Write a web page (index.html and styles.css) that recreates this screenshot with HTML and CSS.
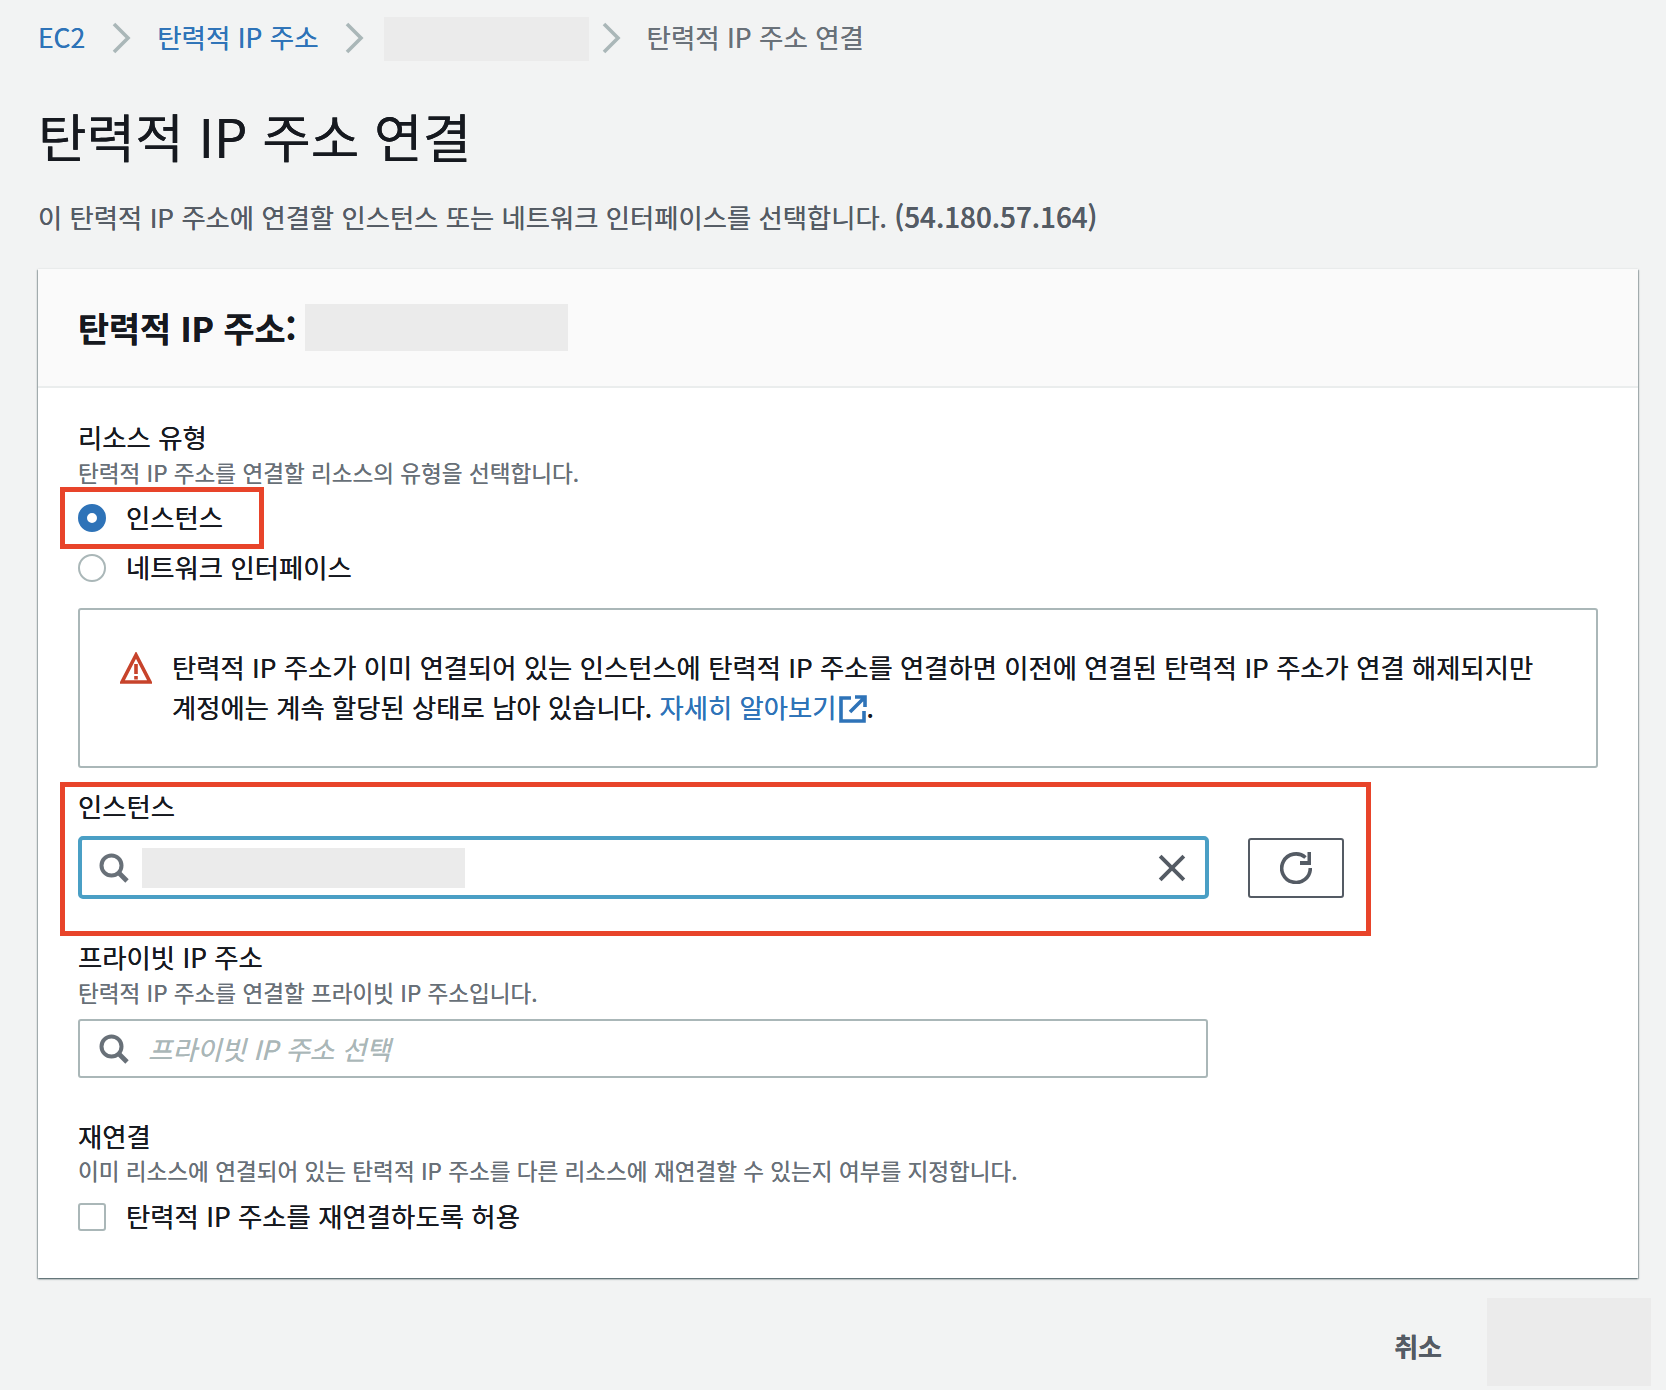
FILE: index.html
```html
<!DOCTYPE html>
<html lang="ko">
<head>
<meta charset="utf-8">
<title>탄력적 IP 주소 연결</title>
<link rel="stylesheet" href="styles.css">
</head>
<body>
<main class="page">
  <nav class="crumbs">
    <a class="crumb-link">EC2</a>
    <svg class="chev" viewBox="0 0 20 32"><path d="M3 2l14 14L3 30" fill="none" stroke="#aab7b8" stroke-width="3.6"/></svg>
    <a class="crumb-link">탄력적 IP 주소</a>
    <svg class="chev chev-second" viewBox="0 0 20 32"><path d="M3 2l14 14L3 30" fill="none" stroke="#aab7b8" stroke-width="3.6"/></svg>
    <span class="blank blank-crumb"></span>
    <svg class="chev chev-last" viewBox="0 0 20 32"><path d="M3 2l14 14L3 30" fill="none" stroke="#aab7b8" stroke-width="3.6"/></svg>
    <span class="crumb-current">탄력적 IP 주소 연결</span>
  </nav>
  <h1 class="title">탄력적 IP 주소 연결</h1>
  <p class="subtitle">이 탄력적 IP 주소에 연결할 인스턴스 또는 네트워크 인터페이스를 선택합니다. <span class="address">(54.180.57.164)</span></p>

  <section class="card">
    <header class="card-head">
      <h2 class="card-title">탄력적 IP 주소:</h2>
      <span class="blank blank-head"></span>
    </header>
    <div class="card-body">
      <div class="label">리소스 유형</div>
      <div class="desc">탄력적 IP 주소를 연결할 리소스의 유형을 선택합니다.</div>
      <div class="radios">
        <div class="option">
          <span class="radio radio-on"></span><span class="option-text">인스턴스</span>
          <span class="mark mark-radio"></span>
        </div>
        <div class="option">
          <span class="radio"></span><span class="option-text">네트워크 인터페이스</span>
        </div>
      </div>
      <div class="alert">
        <svg class="alert-icon" viewBox="0 0 32 32">
          <path d="M16 3L2 30h28z" fill="none" stroke="#c7432b" stroke-width="3.6" stroke-linejoin="miter"/>
          <path d="M14.2 12h3.6v10h-3.600zM14.2 24h3.6v3.4h-3.600z" fill="#c7432b"/>
        </svg>
        <p class="alert-text">탄력적 IP 주소가 이미 연결되어 있는 인스턴스에 탄력적 IP 주소를 연결하면 이전에 연결된 탄력적 IP 주소가 연결 해제되지만 계정에는 계속 할당된 상태로 남아 있습니다. <a class="link">자세히 알아보기<svg class="ext" viewBox="0 0 28 28"><path d="M12 3H2v23h23V16" fill="none" stroke="#2e73b8" stroke-width="3.6"/><path d="M16 2h10v10M25 3L11 17" fill="none" stroke="#2e73b8" stroke-width="3.6"/></svg></a>.</p>
      </div>
      <div class="instance">
        <span class="mark mark-instance"></span>
        <div class="label">인스턴스</div>
        <div class="instance-row">
          <div class="field field-focus">
            <svg class="search" viewBox="0 0 30 30"><circle cx="12.500" cy="12.500" r="10" fill="none" stroke="#687078" stroke-width="4"/><path d="M19.500 19.500l8.500 8.500" stroke="#687078" stroke-width="4.800"/></svg>
            <span class="blank blank-input"></span>
            <svg class="clear" viewBox="0 0 26 26"><path d="M2 2l22 22M24 2L2 24" stroke="#545b64" stroke-width="3.600"/></svg>
          </div>
          <button class="refresh" type="button">
            <svg viewBox="0 0 32 32" class="refresh-icon"><path d="M25.500 5.500A14.300 14.300 0 1 0 30.300 16" fill="none" stroke="#545b64" stroke-width="3.600"/><path d="M20 9h7.500V0H31v13H20z" fill="#545b64"/></svg>
          </button>
        </div>
      </div>
      <div class="label label-private">프라이빗 IP 주소</div>
      <div class="desc">탄력적 IP 주소를 연결할 프라이빗 IP 주소입니다.</div>
      <div class="field field-plain">
        <svg class="search" viewBox="0 0 30 30"><circle cx="12.500" cy="12.500" r="10" fill="none" stroke="#687078" stroke-width="4"/><path d="M19.500 19.500l8.500 8.500" stroke="#687078" stroke-width="4.800"/></svg>
        <span class="placeholder">프라이빗 IP 주소 선택</span>
      </div>
      <div class="label label-reconnect">재연결</div>
      <div class="desc desc-tight">이미 리소스에 연결되어 있는 탄력적 IP 주소를 다른 리소스에 재연결할 수 있는지 여부를 지정합니다.</div>
      <div class="option option-check">
        <span class="check"></span><span class="option-text">탄력적 IP 주소를 재연결하도록 허용</span>
      </div>
    </div>
  </section>
  <footer class="actions">
    <span class="cancel">취소</span>
    <span class="blank blank-submit"></span>
  </footer>
</main>
</body>
</html>
```
FILE: styles.css
```css
* { box-sizing: border-box; }
html, body { margin: 0; padding: 0; }
body {
  background: #f2f3f3;
  color: #16191f;
  font-family: "Noto Sans CJK KR", "Noto Sans", sans-serif;
  height: 1390px;
  overflow: hidden;
  text-shadow: 0 0 .5px currentColor;
}
.page { padding: 17px 15px 0 38px; }
.blank { display: block; background: #ebebeb; flex: none; }

.crumbs { display: flex; align-items: center; height: 44px; font-size: 26.5px; }
.crumb-link { color: #2e73b8; margin-bottom: 6px; }
.crumb-current { color: #687078; margin-bottom: 6px; }
.chev { width: 20px; height: 32px; margin: 0 26px 2px 26px; flex: none; }
.chev-second { margin-left: 25px; }
.chev-last { margin: 0 26px 2px 12px; }
.blank-crumb { width: 205px; height: 44px; margin-left: -6px; }

.title { margin: 44px 0 0; font-size: 52.8px; line-height: 60px; font-weight: 400; }
.subtitle { height: 36px; margin: 34px 0 0; font-size: 26.33px; line-height: 36px; color: #545b64; }
.address { font-size: 27.8px; font-weight: 500; line-height: 30px; }

.card {
  width: 1600px;
  margin-top: 34px;
  background: #fff;
  box-shadow: 0 1px 2px rgba(0, 28, 36, .5), 1px 1px 1px rgba(0, 28, 36, .2), -1px 1px 1px rgba(0, 28, 36, .2);
}
.card-head {
  display: flex;
  align-items: center;
  height: 119px;
  padding-left: 40px;
  background: #fafafa;
  border-bottom: 2px solid #eaeded;
}
.card-title { margin: 0; font-size: 33.7px; font-weight: 700; line-height: 40px; }
.blank-head { width: 263px; height: 47px; margin-left: 9px; }

.card-body { padding: 33px 40px 43px; }
.label { font-size: 26.4px; line-height: 32px; }
.desc { font-size: 22.57px; line-height: 30px; color: #687078; margin-top: 5px; }
.desc-tight { margin-top: 4px; }

.radios { margin-top: 12px; display: flex; flex-direction: column; gap: 14px; }
.option { position: relative; display: flex; align-items: center; height: 36px; font-size: 26.4px; gap: 20px; }
.option-text { margin-bottom: 4px; }
.radio {
  width: 28px; height: 28px;
  border-radius: 50%;
  border: 2px solid #aab7b8;
  background: #fff;
  flex: none;
}
.radio-on { border: 9px solid #2e73b8; }
.mark { position: absolute; border: 5px solid #e8442a; pointer-events: none; }
.mark-radio { left: -18px; top: -13px; width: 204px; height: 62px; }

.alert {
  display: flex;
  width: 1520px;
  height: 160px;
  margin-top: 22px;
  padding: 37px 40px 0;
  border: 2px solid #aab7b8;
  border-radius: 3px;
}
.alert-icon { width: 32px; height: 32px; margin-top: 5px; flex: none; }
.alert-text { margin: 0 0 0 20px; font-size: 26.33px; line-height: 40px; word-break: keep-all; }
.link { color: #2e73b8; }
.ext { width: 28px; height: 28px; margin-left: 2px; vertical-align: -5px; }

.instance { position: relative; margin-top: 22px; }
.mark-instance { left: -18px; top: -8px; width: 1311px; height: 154px; }
.instance-row { display: flex; align-items: center; gap: 39px; margin-top: 14px; }
.field { display: flex; align-items: center; background: #fff; }
.field-focus {
  width: 1131px; height: 63px;
  padding: 0 19px 0 17px;
  border: 4px solid #4a9fc5;
  border-radius: 5px;
}
.field-plain {
  width: 1130px; height: 59px;
  margin-top: 11px;
  padding: 0 19px;
  border: 2px solid #aab7b8;
  border-radius: 3px;
}
.search { width: 30px; height: 30px; flex: none; }
.blank-input { width: 323px; height: 40px; margin-left: 13px; }
.clear { width: 28px; height: 28px; margin-left: auto; }
.refresh {
  display: flex; align-items: center; justify-content: center;
  width: 96px; height: 60px;
  padding: 0;
  background: #fff;
  border: 2px solid #545b64;
  border-radius: 3px;
}
.refresh-icon { width: 32px; height: 32px; }
.placeholder { margin-left: 19px; font-size: 26.6px; font-style: italic; color: #aab7b8; }

.label-private { margin-top: 42px; }
.label-reconnect { margin-top: 42px; }
.option-check { margin-top: 13px; }
.check {
  width: 28px; height: 28px;
  background: #fff;
  border: 2px solid #aab7b8;
  border-radius: 3px;
  flex: none;
}

.actions { display: flex; justify-content: flex-end; align-items: center; gap: 45px; margin-top: 20px; }
.cancel { font-size: 26px; font-weight: 700; color: #545b64; padding-top: 6px; }
.blank-submit { width: 164px; height: 88px; }
```
